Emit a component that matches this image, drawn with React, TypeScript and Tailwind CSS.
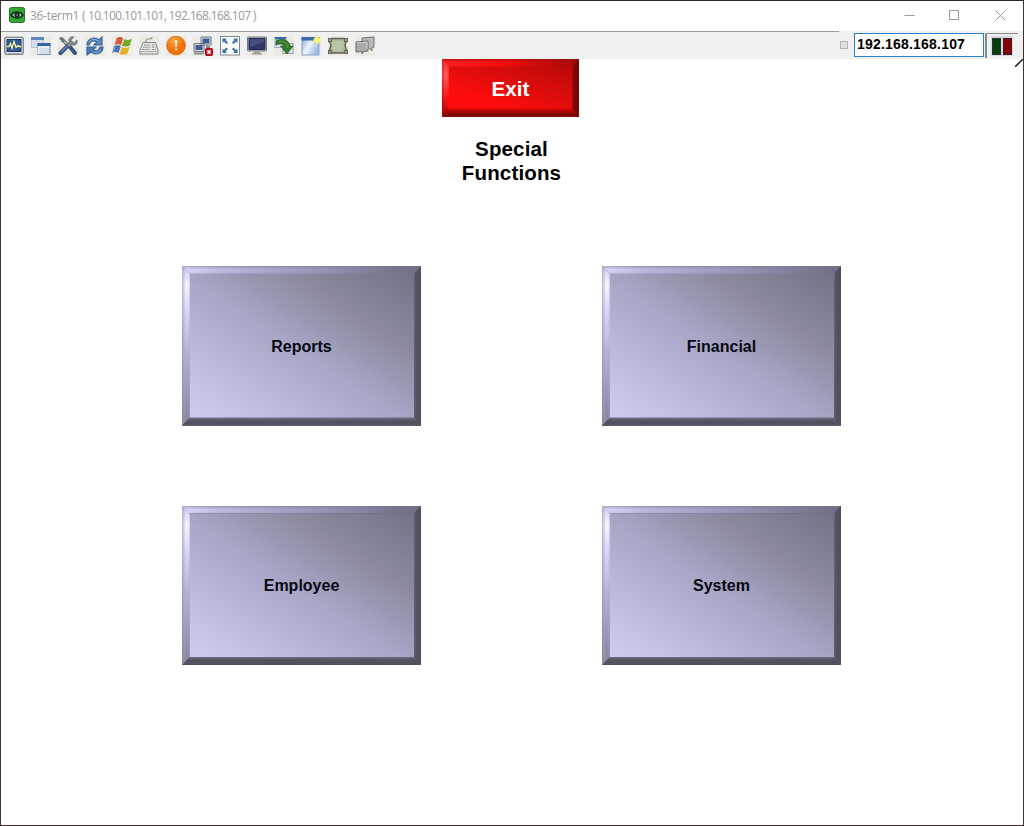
import type { ReactNode } from "react";

function Icon({ children }: { children: ReactNode }) {
  return (
    <svg viewBox="0 0 20 20" className="h-5 w-5 shrink-0">
      <rect width="20" height="20" fill="#ebebe4" />
      {children}
    </svg>
  );
}

const icons: ReactNode[] = [
  <Icon key="monitor">
    <rect x="0.8" y="1.2" width="18.4" height="17" rx="2" fill="#e2e6ea" stroke="#66707a" strokeWidth="1.1" />
    <rect x="3" y="3.5" width="14" height="12" fill="#2f598f" stroke="#183b6d" />
    <path d="M3 10.5h2l1.5-3 1.5 5 2-7 2 6 2-2 1 1h2" fill="none" stroke="#f7f5a0" strokeWidth="1.3" />
    <path d="M4 17.5h12" stroke="#8d969d" strokeWidth="0.8" />
  </Icon>,
  <Icon key="windows">
    <rect x="0.5" y="1.5" width="12" height="10" fill="#d4deed" stroke="#b7c3d6" />
    <rect x="0" y="1" width="13" height="3" fill="#6484b5" />
    <rect x="7" y="7.5" width="12" height="11" fill="#d4deed" stroke="#8192ab" />
    <path d="M7.5 18V11H18" stroke="#fff" fill="none" />
    <rect x="6.5" y="7" width="13" height="3" fill="#3264a9" />
  </Icon>,
  <Icon key="tools">
    <path d="m3 2 14 15" stroke="#4c5355" strokeWidth="3.2" />
    <path d="m3 2 13 14" stroke="#c4cacb" strokeWidth="1.4" />
    <path d="m12 11 5 6" stroke="#365684" strokeWidth="4" strokeLinecap="round" />
    <path d="m2.500 17 8-8" stroke="#304f7e" strokeWidth="4" strokeLinecap="round" />
    <path d="m3 16 7-7" stroke="#6386b7" strokeWidth="1.5" />
    <path d="M19 4 16 7l-3-3 3-3c-3-1-6 1-5 5l-2 3 2 2 3-2c4 1 6-2 5-5Z" fill="#7f8b91" stroke="#5c686e" strokeWidth=".6" />
    <path d="m1 2 3-1 3 4-2 2Z" fill="#697379" />
  </Icon>,
  <Icon key="refresh">
    <path d="M2 9C2 3 9 0 14 4l3-3v8H9l3-3C8 4 5 5 4 9Z" fill="#5a8cc7" stroke="#345f97" strokeWidth="1.1" />
    <path d="M18 11c0 6-7 9-12 5l-4 3v-8h9l-3 3c4 2 6 1 7-3Z" fill="#497db9" stroke="#345f97" strokeWidth="1.1" />
    <path d="M4 6c3-4 7-3 9-1M16 14c-3 3-6 3-8 2" fill="none" stroke="#9abce4" />
  </Icon>,
  <Icon key="flag">
    <path d="M4.500 2c3-1.500 5-1 6.500.3L9 9.200C7 8 5 7.800 2.300 8.800Z" fill="#d5573c" />
    <path d="M11.800 3c3 1.500 5 1 8 0l-2.200 6.800c-3 1-5 1-7.800 0Z" fill="#73a82b" />
    <path d="M2 10c3-1 5-1 6.700.3L6.500 17C4.500 15.700 2.500 15.700 0 16.700Z" fill="#4272b7" />
    <path d="M9.500 11c3 1.500 5 1 7.900 0l-2.200 7c-3 1-5 1-7.900-.2Z" fill="#e7ae28" />
    <path d="m5 3-2 5m9-4-2 5M3 11l-2 5m9-4-2 5" stroke="#fff" strokeOpacity=".4" />
  </Icon>,
  <Icon key="keyboard">
    <path d="M7 6c0-3 0-3 3-3s3-1 3-2" fill="none" stroke="#979797" strokeWidth="1.2" />
    <path d="M4 6.500h12.500L19 14v4H1v-4Z" fill="#e1e1de" stroke="#8b8b89" />
    <path d="M1 15.500h18" stroke="#b1b1ae" />
    <path d="M5 9h6M4 11.200h7M3 13.500h8M13 9h3m-3 2.200h3.500m-3.500 2.300h4" stroke="#969694" strokeWidth="1.1" strokeDasharray="2 .7" />
  </Icon>,
  <Icon key="alert">
    <defs><radialGradient id="orange" cx="40%" cy="25%"><stop stopColor="#fca744" /><stop offset="1" stopColor="#ef710b" /></radialGradient></defs>
    <circle cx="10" cy="9.500" r="9.400" fill="url(#orange)" stroke="#d56d16" strokeWidth=".8" />
    <path d="M9 4h2.200l-.4 7H9.400Z" fill="#fff5de" /><circle cx="10.100" cy="13.500" r="1.100" fill="#fff5de" />
  </Icon>,
  <Icon key="disconnect">
    <path d="M8 1h10v8H8ZM1 7.500h10v8H1Z" fill="#dadddc" stroke="#737b81" />
    <path d="M9.500 2.500h7v5h-7ZM2.500 9h7v5h-7Z" fill="#3e5d95" />
    <path d="M14 9v2h3M1 17.500h10" stroke="#888d8d" strokeWidth="2" fill="none" />
    <rect x="12.500" y="12.500" width="7" height="7" rx="1" fill="#c91723" stroke="#970917" />
    <path d="m14.500 14.500 3 3m0-3-3 3" stroke="#fff" strokeWidth="1.6" />
  </Icon>,
  <Icon key="expand">
    <rect x=".5" y=".5" width="19" height="18.500" fill="#fbfcfc" stroke="#7f8989" />
    <path d="M2.500 7V2.500H7L5.500 4 8 6.500 6.500 8 4 5.500ZM13 2.500h4.500V7L16 5.500 13.500 8 12 6.500 14.500 4ZM2.500 12.500 4 14l2.500-2.500L8 13l-2.500 2.500L7 17H2.500ZM13 17l1.500-1.500L12 13l1.500-1.500L16 14l1.500-1.500V17Z" fill="#386fa9" />
  </Icon>,
  <Icon key="display">
    <rect x=".5" y="1" width="19" height="14" rx="1" fill="#c9ccca" stroke="#717679" />
    <rect x="2" y="2.500" width="16" height="11" fill="#30376b" stroke="#202753" />
    <path d="M3 3h14v3L3 11Z" fill="#626b98" opacity=".45" />
    <path d="M7 15.500h6v1.500h2v1.500H5V17h2Z" fill="#9b9e9d" />
  </Icon>,
  <Icon key="transfer">
    <rect x="1" y="1.500" width="11" height="10" fill="#dce5f1" stroke="#9aadc5" />
    <rect x="1" y="1" width="11" height="2.500" fill="#3669ac" />
    <rect x="9" y="7.500" width="10" height="10" fill="#e3eaf3" stroke="#8d9baa" />
    <path d="M2 5c7-3 13-1 14 5h3l-6 8-6.500-8H10c0-2-3-3-8-1Z" fill="#387b2c" stroke="#265e23" strokeWidth=".8" />
    <path d="M5 5.500c5-1 8 1 8.500 6" fill="none" stroke="#6f9b55" />
  </Icon>,
  <Icon key="new-window">
    <defs><linearGradient id="window" x2="1" y2=".5"><stop stopColor="#82a8dc" /><stop offset=".5" stopColor="#eff4fb" /><stop offset="1" stopColor="#9dbbe3" /></linearGradient></defs>
    <rect x="1" y="2" width="17" height="17" fill="url(#window)" stroke="#91a8c5" />
    <rect x=".5" y="1" width="18" height="3.500" fill="#3b6ba9" />
    <circle cx="16" cy="4" r="3.500" fill="#f0eb59" opacity=".85" />
    <path d="m16-.5 1 3 3 1.500-3 1.500-1 3-1-3-3-1.500 3-1.500Z" fill="#fff67c" />
  </Icon>,
  <Icon key="region">
    <path d="M4 2.500h12L18 6l-1 3 1.500 5-3 3H4.500l-3-3L3 9 1.500 6Z" fill="#adb99b" stroke="#5e614e" strokeWidth="1.4" />
    <path d="M5 5h9l2 4-2 6H6l-2-5Z" fill="#b9c5a9" />
    <path d="M0 2h4v4H0ZM16 2h4v4h-4ZM0 14h4v4H0ZM16 14h4v4h-4Z" fill="#67664e" />
    <path d="M1 3h2v2H1Zm16 0h2v2h-2ZM1 15h2v2H1Zm16 0h2v2h-2Z" fill="#a49d7e" />
  </Icon>,
  <Icon key="chat">
    <path d="m7 2 12-1v10l-2 .5v3L14 12l-7 .5Z" fill="#b9bab8" stroke="#747574" />
    <path d="m1 6 12-1v10l-4 .5L7 18v-2.500l-6 .5Z" fill="#a8aba8" stroke="#696a69" />
    <path d="m2 7 10-1v7" fill="none" stroke="#d2d4d2" />
  </Icon>,
];

function BevelButton({ label }: { label: string }) {
  return (
    <button className="grid h-[159.5px] w-[239px] grid-cols-1 grid-rows-1 overflow-hidden bg-[#68677b] text-[16px] font-bold text-[#080812]">
      <span className="[grid-area:1/1] bg-[linear-gradient(180deg,#77768c80_0px,#77768c30_2px,transparent_3px,transparent_6px,#77768c50_8px),linear-gradient(90deg,#d8d7fa_0px,#b9b8e0_40px,#a09fc2_110px,#6d6c82_240px)] [clip-path:polygon(0_0,100%_0,calc(100%-7px)_8px,8px_8px)]" />
      <span className="[grid-area:1/1] bg-[linear-gradient(90deg,#8786a690_0px,#a9a8ca60_2px,transparent_4px,transparent_6px,#a9a8ca70_8px,transparent_9px),linear-gradient(180deg,#cac9f1_0px,#f6f5ff_18px,#d9d8f8_45px,#b5b4d6_85px,#9796b3_130px,#858499_160px)] [clip-path:polygon(0_0,8px_8px,8px_calc(100%-8px),0_100%)]" />
      <span className="[grid-area:1/1] bg-[linear-gradient(270deg,#504f5d_0px,#535260_5px,#65647a_7px,#6d6c82_8px)] [clip-path:polygon(100%_0,100%_100%,calc(100%-7px)_calc(100%-8px),calc(100%-7px)_8px)]" />
      <span className="[grid-area:1/1] bg-[linear-gradient(0deg,#535260_0px,#535260_5px,#6d6c82_8px,#6d6c82_9px)] [clip-path:polygon(0_100%,8px_calc(100%-8px),calc(100%-7px)_calc(100%-8px),100%_100%)]" />
      <span className="[grid-area:1/1] mt-2 mr-[7px] mb-[7px] ml-2 flex items-center justify-center bg-[linear-gradient(to_top_right,#cecdf1_0%,#c3c2e5_15%,#a7a6c7_48%,#8b8a9f_73%,#737386_100%)] pt-px pr-px">{label}</span>
    </button>
  );
}

function ExitButton() {
  return (
    <button className="grid h-[57.5px] w-[137px] grid-cols-1 grid-rows-1 overflow-hidden bg-[#a00a0a] text-[20.5px] font-bold text-white">
      <span className="[grid-area:1/1] bg-[linear-gradient(180deg,#85101099_0px,transparent_3px,transparent_6px,#b0000040_8px),linear-gradient(90deg,#ff2020,#fa0e0e_40%,#a50a0a)] [clip-path:polygon(0_0,100%_0,calc(100%-7px)_8px,7px_8px)]" />
      <span className="[grid-area:1/1] bg-[linear-gradient(90deg,#b5101090_0px,transparent_3px,transparent_5px,#f31313a0_7px),linear-gradient(180deg,#f93131_0px,#ff5c5c_16px,#f81b1b_38px,#970000_58px)] [clip-path:polygon(0_0,7px_8px,7px_calc(100%-8px),0_100%)]" />
      <span className="[grid-area:1/1] bg-[linear-gradient(270deg,#730a0a_0px,#7d0505_4px,#a60909_7px,#a60909_8px)] [clip-path:polygon(100%_0,100%_100%,calc(100%-7px)_calc(100%-8px),calc(100%-7px)_8px)]" />
      <span className="[grid-area:1/1] bg-[linear-gradient(0deg,#750b0b_0px,#850505_3px,#d00707_8px,#d00707_9px)] [clip-path:polygon(0_100%,7px_calc(100%-8px),calc(100%-7px)_calc(100%-8px),100%_100%)]" />
      <span className="[grid-area:1/1] mx-[7px] mt-2 mb-[7.5px] flex items-center justify-center bg-[linear-gradient(to_top_right,#ff0c0c_0%,#fd0c0c_25%,#dc0c0c_60%,#b90a0a_100%)] pt-[2px] tracking-[0.1px]">Exit</span>
    </button>
  );
}

export default function App() {
  return (
    <div className="flex h-[826px] w-[1024px] flex-col overflow-hidden border border-[#41302f] border-t-[#292326] bg-white font-['Liberation_Sans',sans-serif]">
      <header className="flex h-[30px] shrink-0 items-center pl-2 font-['Open_Sans',sans-serif] text-[12px] text-[#999]">
        <svg viewBox="0 0 16 16" className="h-4 w-4 -translate-y-px">
          <rect x=".5" y=".5" width="15" height="15" rx="2" fill="#32a832" stroke="#287528" />
          <path d="M2 8c3-4 9-4 12 0-3 4-9 4-12 0Z" fill="#a6c7a3" stroke="#132f17" strokeWidth="1.4" />
          <circle cx="8" cy="8" r="2.500" fill="#10271b" /><circle cx="8" cy="8" r=".8" fill="#a8c0a6" />
        </svg>
        <h1 className="ml-[5px] w-[235px] whitespace-pre tracking-[-0.58px]">
          <span className="tracking-[-0.3px]">36-term1 ( </span>
          <span className="tracking-[-0.66px]">10.100.101.101, 192.168.168.107 )</span>
        </h1>
        <svg viewBox="0 0 110 16" className="mr-[9px] ml-auto h-4 w-[110px] -translate-y-px fill-none stroke-[#999]">
          <path d="M0.500 8.500h10M45.500 3.500h9v9h-9ZM91.500 3.500l10 10m0-10-10 10" />
        </svg>
      </header>
      <div className="flex h-[28px] shrink-0 bg-[#f0f0f0]">
        <div className="flex w-[838px] items-center gap-[7px] border-t border-[#9b9b9b] pl-[3px]">{icons}</div>
        <div className="mt-[10px] ml-px h-2 w-2 border border-[#b4b4b4] bg-[#dedede]" />
        <div className="mt-[2px] ml-[6px] h-6 w-[130px] border border-[#2382d5] bg-white pl-[2px] text-[14px] leading-[20px] font-bold tracking-[0.2px] text-black">192.168.168.107</div>
        <div className="mt-[2px] ml-px h-[25px] w-[33px] border-t border-l-2 border-[#8a8a8a] pt-[2px] pl-1">
          <div className="flex h-5 w-[22px] gap-[2px] bg-[#d8d8de] p-px pt-[2px]">
            <div className="h-[17px] w-[9px] border border-[#28332b] bg-[#073f08]" />
            <div className="h-[17px] w-[9px] border border-[#382128] bg-[#870006]" />
          </div>
        </div>
      </div>
      <main className="flex flex-1 flex-col">
        <div className="flex h-[207px] shrink-0">
          <div className="ml-[441px] w-[137px]">
            <ExitButton />
            <h2 className="mt-[20.5px] pl-[2px] text-center text-[20.5px] leading-6 font-bold tracking-[0.15px] text-black">Special<br />Functions</h2>
          </div>
          <svg viewBox="0 0 8 8" className="ml-auto h-2 w-2"><path d="M0 8 8 0" stroke="#111" strokeWidth="1.3" /></svg>
        </div>
        <div className="ml-[181px] grid w-[659px] grid-cols-[239px_239px] justify-between gap-y-20">
          <BevelButton label="Reports" />
          <BevelButton label="Financial" />
          <BevelButton label="Employee" />
          <BevelButton label="System" />
        </div>
      </main>
    </div>
  );
}
